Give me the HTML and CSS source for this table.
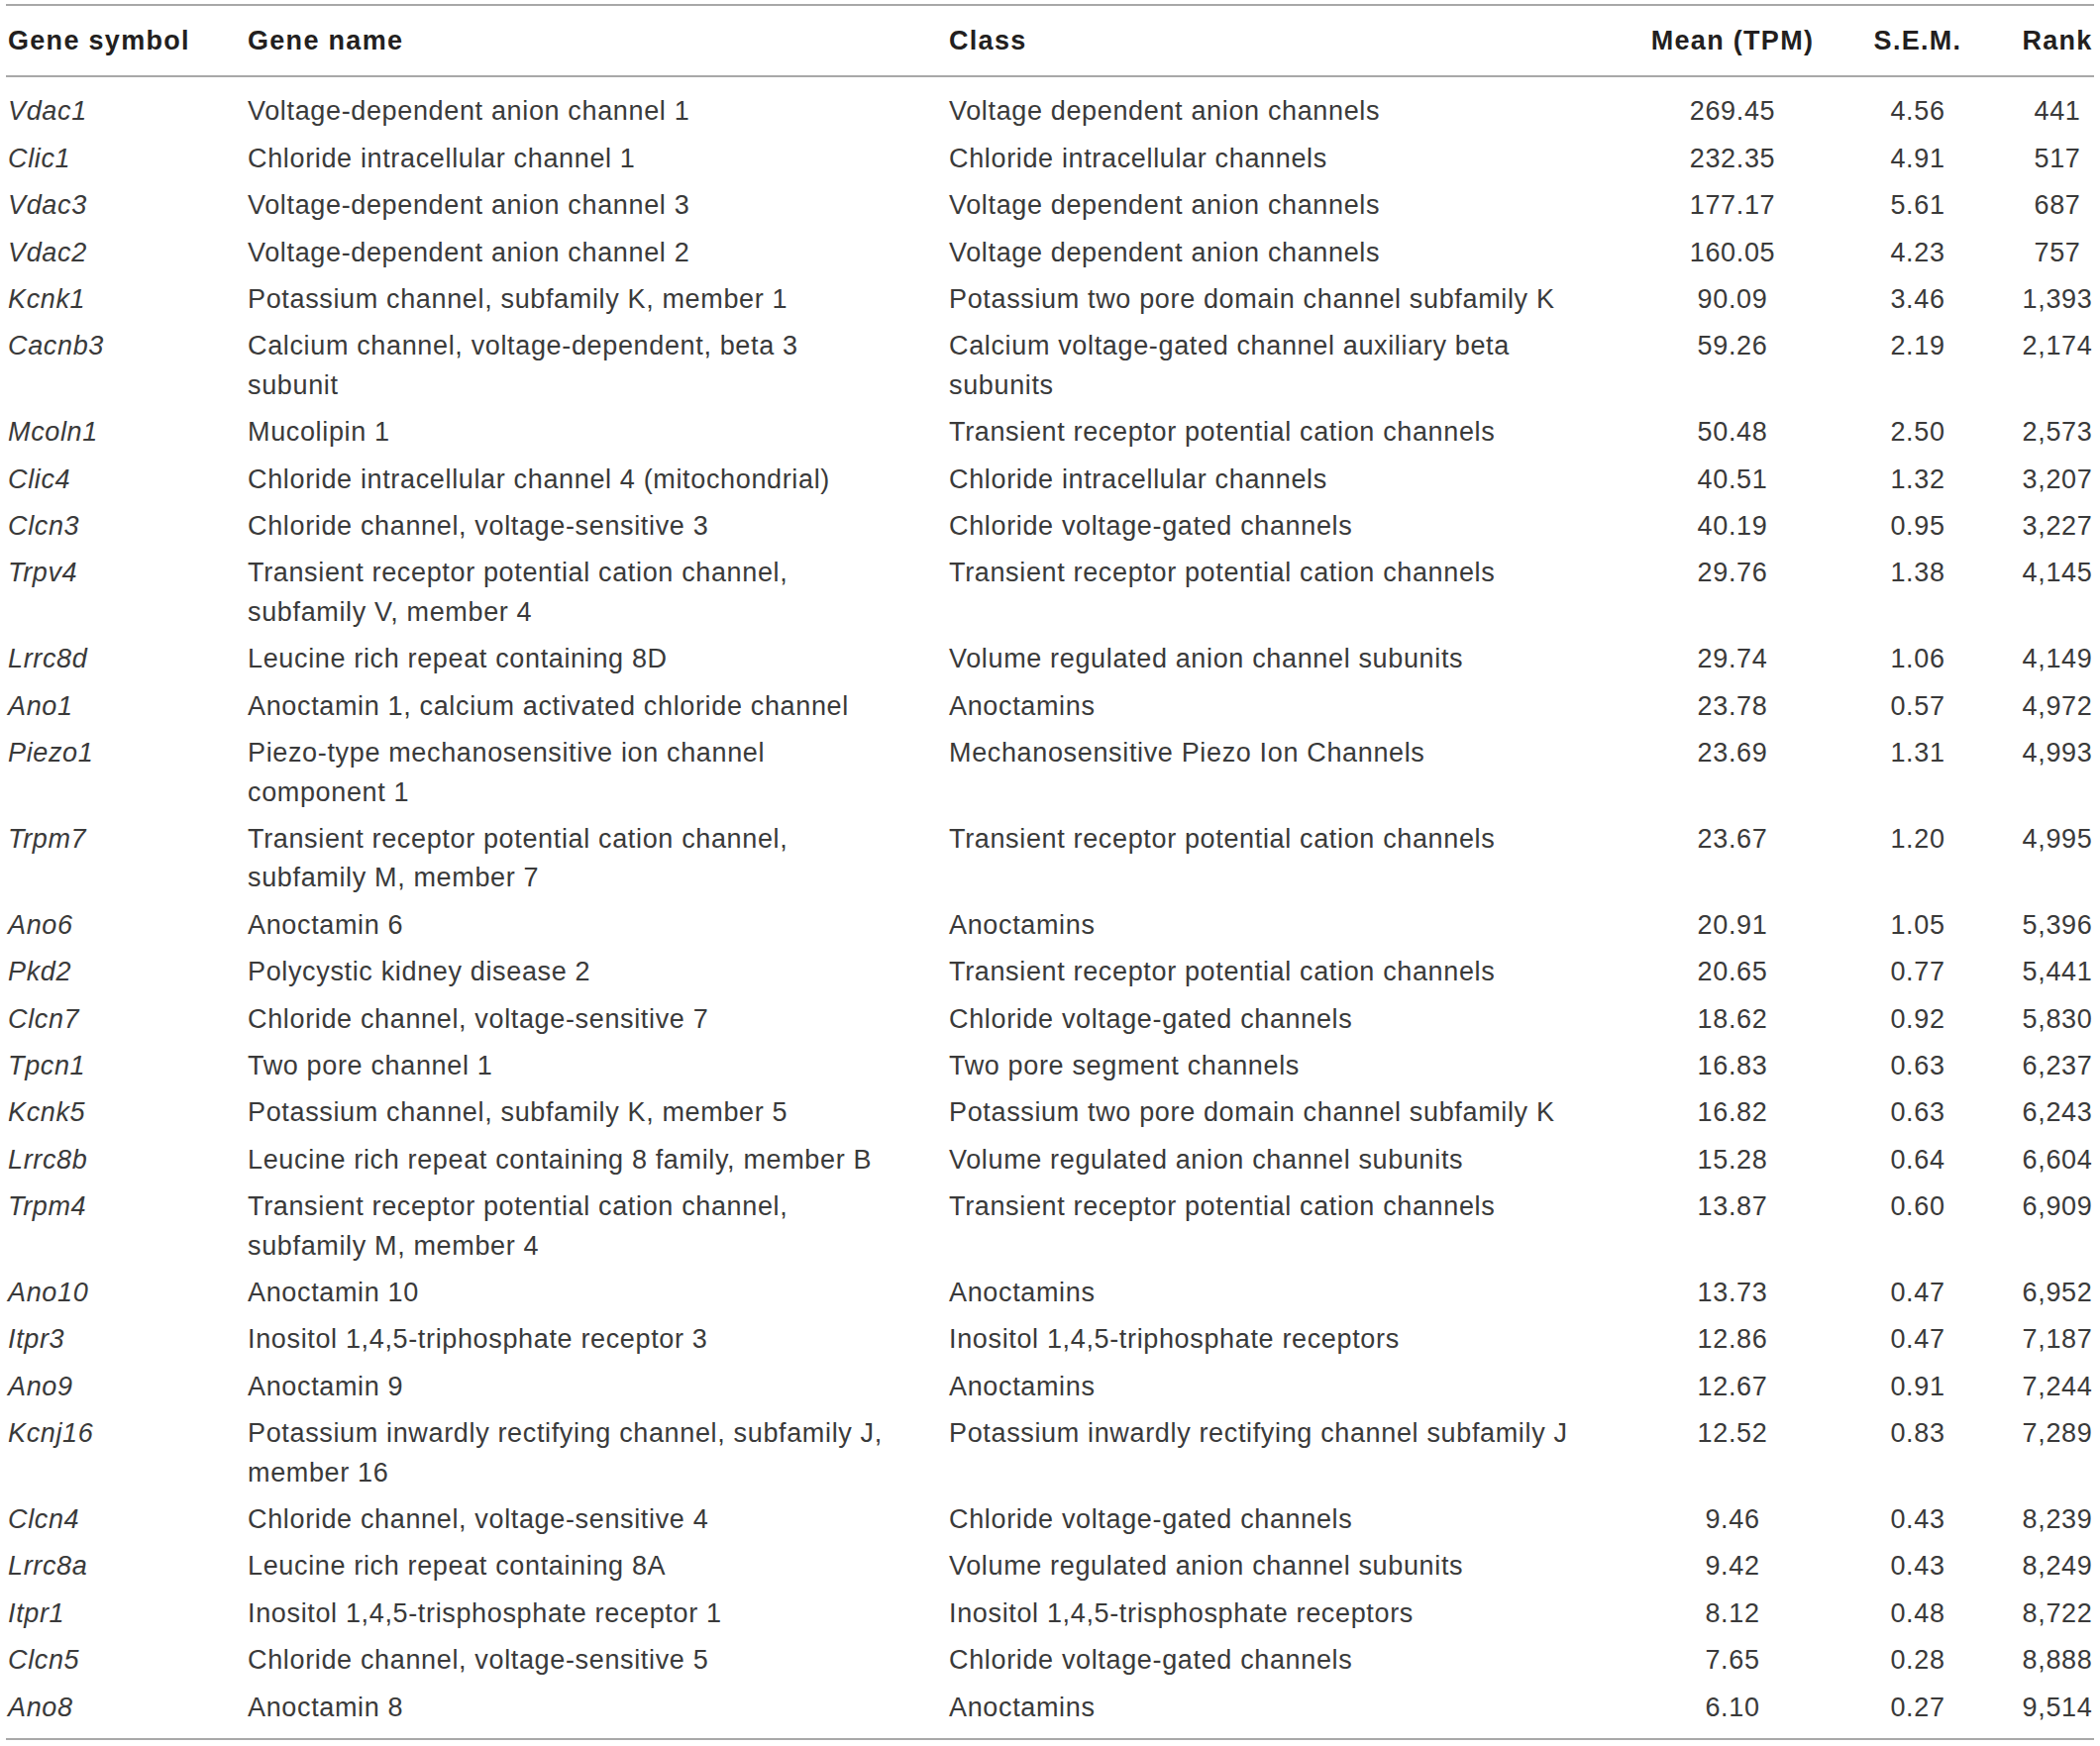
FILE: index.html
```html
<!DOCTYPE html>
<html lang="en">
<head>
<meta charset="utf-8">
<title>Ion channel genes</title>
<link rel="stylesheet" href="styles.css">
</head>
<body>
<table class="tbl">
  <colgroup>
    <col class="c-sym"><col class="c-name"><col class="c-class"><col class="c-mean"><col class="c-sem"><col class="c-rank">
  </colgroup>
  <thead>
    <tr>
      <th class="sym">Gene symbol</th>
      <th class="txt">Gene name</th>
      <th class="txt">Class</th>
      <th class="num">Mean (TPM)</th>
      <th class="num">S.E.M.</th>
      <th class="num">Rank</th>
    </tr>
  </thead>
  <tbody>
    <tr><td class="sym">Vdac1</td><td class="txt">Voltage-dependent anion channel 1</td><td class="txt">Voltage dependent anion channels</td><td class="num">269.45</td><td class="num">4.56</td><td class="num">441</td></tr>
    <tr><td class="sym">Clic1</td><td class="txt">Chloride intracellular channel 1</td><td class="txt">Chloride intracellular channels</td><td class="num">232.35</td><td class="num">4.91</td><td class="num">517</td></tr>
    <tr><td class="sym">Vdac3</td><td class="txt">Voltage-dependent anion channel 3</td><td class="txt">Voltage dependent anion channels</td><td class="num">177.17</td><td class="num">5.61</td><td class="num">687</td></tr>
    <tr><td class="sym">Vdac2</td><td class="txt">Voltage-dependent anion channel 2</td><td class="txt">Voltage dependent anion channels</td><td class="num">160.05</td><td class="num">4.23</td><td class="num">757</td></tr>
    <tr><td class="sym">Kcnk1</td><td class="txt">Potassium channel, subfamily K, member 1</td><td class="txt">Potassium two pore domain channel subfamily K</td><td class="num">90.09</td><td class="num">3.46</td><td class="num">1,393</td></tr>
    <tr><td class="sym">Cacnb3</td><td class="txt">Calcium channel, voltage-dependent, beta 3<br>subunit</td><td class="txt">Calcium voltage-gated channel auxiliary beta<br>subunits</td><td class="num">59.26</td><td class="num">2.19</td><td class="num">2,174</td></tr>
    <tr><td class="sym">Mcoln1</td><td class="txt">Mucolipin 1</td><td class="txt">Transient receptor potential cation channels</td><td class="num">50.48</td><td class="num">2.50</td><td class="num">2,573</td></tr>
    <tr><td class="sym">Clic4</td><td class="txt">Chloride intracellular channel 4 (mitochondrial)</td><td class="txt">Chloride intracellular channels</td><td class="num">40.51</td><td class="num">1.32</td><td class="num">3,207</td></tr>
    <tr><td class="sym">Clcn3</td><td class="txt">Chloride channel, voltage-sensitive 3</td><td class="txt">Chloride voltage-gated channels</td><td class="num">40.19</td><td class="num">0.95</td><td class="num">3,227</td></tr>
    <tr><td class="sym">Trpv4</td><td class="txt">Transient receptor potential cation channel,<br>subfamily V, member 4</td><td class="txt">Transient receptor potential cation channels</td><td class="num">29.76</td><td class="num">1.38</td><td class="num">4,145</td></tr>
    <tr><td class="sym">Lrrc8d</td><td class="txt">Leucine rich repeat containing 8D</td><td class="txt">Volume regulated anion channel subunits</td><td class="num">29.74</td><td class="num">1.06</td><td class="num">4,149</td></tr>
    <tr><td class="sym">Ano1</td><td class="txt">Anoctamin 1, calcium activated chloride channel</td><td class="txt">Anoctamins</td><td class="num">23.78</td><td class="num">0.57</td><td class="num">4,972</td></tr>
    <tr><td class="sym">Piezo1</td><td class="txt">Piezo-type mechanosensitive ion channel<br>component 1</td><td class="txt">Mechanosensitive Piezo Ion Channels</td><td class="num">23.69</td><td class="num">1.31</td><td class="num">4,993</td></tr>
    <tr><td class="sym">Trpm7</td><td class="txt">Transient receptor potential cation channel,<br>subfamily M, member 7</td><td class="txt">Transient receptor potential cation channels</td><td class="num">23.67</td><td class="num">1.20</td><td class="num">4,995</td></tr>
    <tr><td class="sym">Ano6</td><td class="txt">Anoctamin 6</td><td class="txt">Anoctamins</td><td class="num">20.91</td><td class="num">1.05</td><td class="num">5,396</td></tr>
    <tr><td class="sym">Pkd2</td><td class="txt">Polycystic kidney disease 2</td><td class="txt">Transient receptor potential cation channels</td><td class="num">20.65</td><td class="num">0.77</td><td class="num">5,441</td></tr>
    <tr><td class="sym">Clcn7</td><td class="txt">Chloride channel, voltage-sensitive 7</td><td class="txt">Chloride voltage-gated channels</td><td class="num">18.62</td><td class="num">0.92</td><td class="num">5,830</td></tr>
    <tr><td class="sym">Tpcn1</td><td class="txt">Two pore channel 1</td><td class="txt">Two pore segment channels</td><td class="num">16.83</td><td class="num">0.63</td><td class="num">6,237</td></tr>
    <tr><td class="sym">Kcnk5</td><td class="txt">Potassium channel, subfamily K, member 5</td><td class="txt">Potassium two pore domain channel subfamily K</td><td class="num">16.82</td><td class="num">0.63</td><td class="num">6,243</td></tr>
    <tr><td class="sym">Lrrc8b</td><td class="txt">Leucine rich repeat containing 8 family, member B</td><td class="txt">Volume regulated anion channel subunits</td><td class="num">15.28</td><td class="num">0.64</td><td class="num">6,604</td></tr>
    <tr><td class="sym">Trpm4</td><td class="txt">Transient receptor potential cation channel,<br>subfamily M, member 4</td><td class="txt">Transient receptor potential cation channels</td><td class="num">13.87</td><td class="num">0.60</td><td class="num">6,909</td></tr>
    <tr><td class="sym">Ano10</td><td class="txt">Anoctamin 10</td><td class="txt">Anoctamins</td><td class="num">13.73</td><td class="num">0.47</td><td class="num">6,952</td></tr>
    <tr><td class="sym">Itpr3</td><td class="txt">Inositol 1,4,5-triphosphate receptor 3</td><td class="txt">Inositol 1,4,5-triphosphate receptors</td><td class="num">12.86</td><td class="num">0.47</td><td class="num">7,187</td></tr>
    <tr><td class="sym">Ano9</td><td class="txt">Anoctamin 9</td><td class="txt">Anoctamins</td><td class="num">12.67</td><td class="num">0.91</td><td class="num">7,244</td></tr>
    <tr><td class="sym">Kcnj16</td><td class="txt">Potassium inwardly rectifying channel, subfamily J,<br>member 16</td><td class="txt">Potassium inwardly rectifying channel subfamily J</td><td class="num">12.52</td><td class="num">0.83</td><td class="num">7,289</td></tr>
    <tr><td class="sym">Clcn4</td><td class="txt">Chloride channel, voltage-sensitive 4</td><td class="txt">Chloride voltage-gated channels</td><td class="num">9.46</td><td class="num">0.43</td><td class="num">8,239</td></tr>
    <tr><td class="sym">Lrrc8a</td><td class="txt">Leucine rich repeat containing 8A</td><td class="txt">Volume regulated anion channel subunits</td><td class="num">9.42</td><td class="num">0.43</td><td class="num">8,249</td></tr>
    <tr><td class="sym">Itpr1</td><td class="txt">Inositol 1,4,5-trisphosphate receptor 1</td><td class="txt">Inositol 1,4,5-trisphosphate receptors</td><td class="num">8.12</td><td class="num">0.48</td><td class="num">8,722</td></tr>
    <tr><td class="sym">Clcn5</td><td class="txt">Chloride channel, voltage-sensitive 5</td><td class="txt">Chloride voltage-gated channels</td><td class="num">7.65</td><td class="num">0.28</td><td class="num">8,888</td></tr>
    <tr><td class="sym">Ano8</td><td class="txt">Anoctamin 8</td><td class="txt">Anoctamins</td><td class="num">6.10</td><td class="num">0.27</td><td class="num">9,514</td></tr>
  </tbody>
</table>
</body>
</html>
```
FILE: styles.css
```css
html, body {
  margin: 0;
  padding: 0;
  background: #ffffff;
}

body {
  font-family: "Liberation Sans", Arial, Helvetica, sans-serif;
  color: #3a3a3a;
}

.tbl {
  margin: 4px 0 0 6px;
  width: 2108px;
  border-collapse: collapse;
  table-layout: fixed;
  border-top: 2px solid #a8a8a8;
  border-bottom: 2px solid #a8a8a8;
}

.c-sym { width: 238px; }
.c-name { width: 708px; }
.c-class { width: 714px; }
.c-mean { width: 166px; }
.c-sem { width: 208px; }
.c-rank { width: 74px; }

.tbl th,
.tbl td {
  font-size: 27px;
  line-height: 39.4px;
  white-space: nowrap;
  vertical-align: top;
}

.tbl th {
  font-weight: bold;
  color: #231f20;
  letter-spacing: 1.3px;
  padding-top: 16px;
  padding-bottom: 14.5px;
  border-bottom: 2px solid #a8a8a8;
}

.tbl td {
  font-weight: normal;
  letter-spacing: 0.65px;
  padding-top: 4px;
  padding-bottom: 4px;
}

.tbl tbody tr:first-child td {
  padding-top: 15.5px;
}

.tbl tbody tr:last-child td {
  padding-bottom: 10.5px;
}

.tbl .sym {
  text-align: left;
  padding-left: 2px;
  padding-right: 4px;
}

.tbl td.sym {
  font-style: italic;
}

.tbl .txt {
  text-align: left;
  padding-left: 6px;
  padding-right: 6px;
}

.tbl .num {
  text-align: center;
  padding-left: 0;
  padding-right: 0;
}
```
